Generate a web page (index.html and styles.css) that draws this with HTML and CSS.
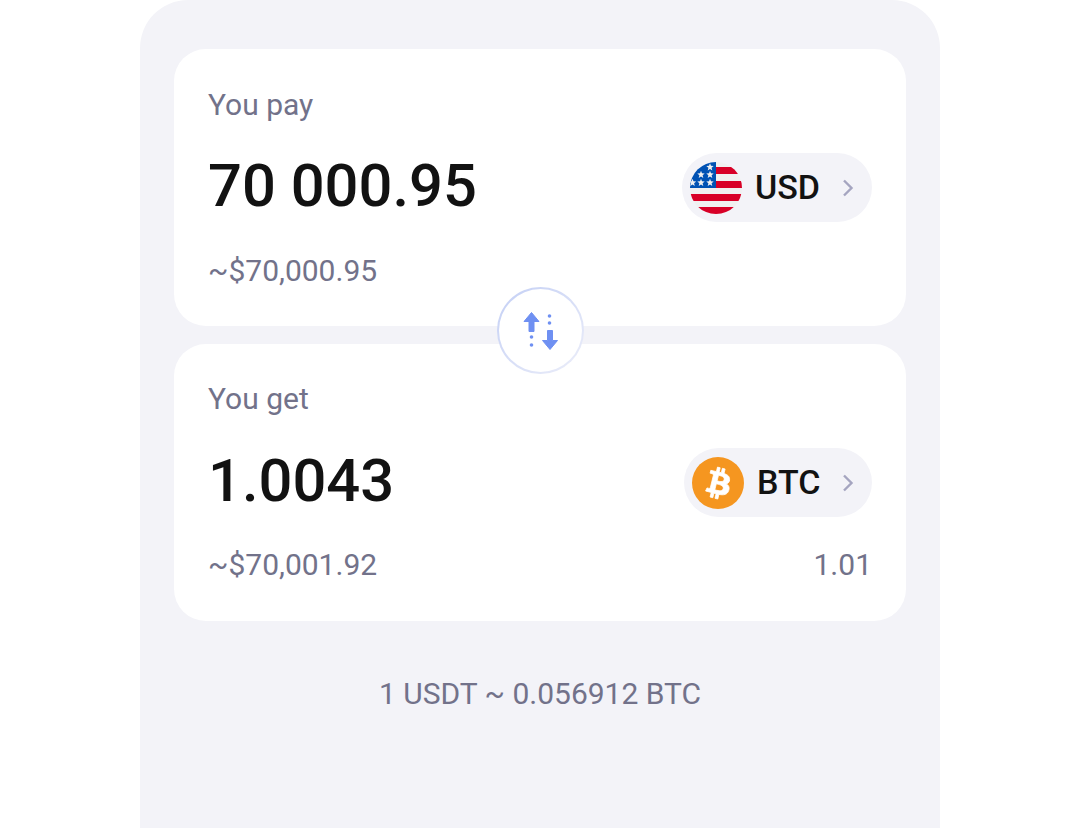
FILE: index.html
```html
<!DOCTYPE html>
<html lang="en">
<head>
    <meta charset="UTF-8">
    <meta name="viewport" content="width=device-width, initial-scale=1.0">
    <title>Exchange</title>
    <link rel="stylesheet" href="styles.css">
</head>
<body>
    <div class="panel">
        <div class="cards">
            <section class="card">
                <div class="label">You pay</div>
                <div class="row">
                    <div class="amount">70 000.95</div>
                    <button class="pill pill-usd">
                        <svg class="coin" viewBox="0 0 52 52">
                            <defs>
                                <clipPath id="flagClip"><circle cx="26" cy="26" r="26"/></clipPath>
                                <path id="star" d="M0-3.800l1 2.600 2.700.2-2.100 1.700.7 2.700-2.300-1.500-2.300 1.500.7-2.700-2.100-1.700 2.700-.2z"/>
                            </defs>
                            <g clip-path="url(#flagClip)">
                                <rect width="52" height="52" fill="#f0f0f0"/>
                                <rect x="26" y="5" width="26" height="7" fill="#d80027"/>
                                <rect x="26" y="19" width="26" height="7" fill="#d80027"/>
                                <rect y="32" width="52" height="7" fill="#d80027"/>
                                <rect y="45" width="52" height="7" fill="#d80027"/>
                                <rect width="26" height="26" fill="#0052b4"/>
                                <g fill="#f0f0f0">
                                    <use href="#star" x="20" y="5"/>
                                    <use href="#star" x="11" y="12.500"/>
                                    <use href="#star" x="20" y="12.500"/>
                                    <use href="#star" x="2.500" y="20.500"/>
                                    <use href="#star" x="11" y="20.500"/>
                                    <use href="#star" x="20" y="20.500"/>
                                </g>
                            </g>
                        </svg>
                        <span class="code">USD</span>
                        <svg class="chev" viewBox="0 0 12 18"><path d="M2 1.500l7.500 7.500-7.500 7.500" fill="none" stroke="#a5a5c0" stroke-width="2.400"/></svg>
                    </button>
                </div>
                <div class="foot"><span>~$70,000.95</span></div>
            </section>
            <button class="swap">
                <svg viewBox="0 0 36 40" width="36" height="40">
                    <g fill="#6f90f2" stroke="#6f90f2" stroke-width="1" stroke-linejoin="round">
                        <path d="M8.500 1.500l7.500 9h-5v10h-5v-10h-5z"/>
                        <path d="M27 38.500l-7.500-9h5v-10h5v10h5z"/>
                    </g>
                    <g fill="#6f90f2">
                        <circle cx="8.500" cy="26" r="1.800"/>
                        <circle cx="8.500" cy="34" r="1.800"/>
                        <circle cx="26.500" cy="5" r="1.800"/>
                        <circle cx="26.500" cy="12" r="1.800"/>
                    </g>
                </svg>
            </button>
            <section class="card card-get">
                <div class="label">You get</div>
                <div class="row">
                    <div class="amount">1.0043</div>
                    <button class="pill pill-btc">
                        <svg class="coin" viewBox="0 0 52 52">
                            <circle cx="26" cy="26" r="26" fill="#f59620"/>
                            <path fill="#fff" stroke="#fff" stroke-width=".8" d="M37.500 22.800c.5-3.300-2-5.100-5.500-6.300l1.100-4.500-2.700-.7-1.100 4.400-2.200-.5 1.100-4.400-2.700-.7-1.100 4.500-1.800-.4-3.800-.9-.7 2.900s2 .5 2 .5c1.100.3 1.300 1 1.300 1.600l-3.100 12.500c-.1.300-.5.800-1.300.6 0 0-2-.5-2-.5l-1.400 3.100 3.600.9 2 .5-1.100 4.600 2.700.7 1.100-4.500 2.200.6-1.100 4.500 2.800.7 1.100-4.600c4.700.9 8.300.5 9.800-3.800 1.200-3.400-.1-5.400-2.500-6.700 1.800-.4 3.100-1.600 3.500-4zm-6.300 8.900c-.8 3.400-6.500 1.600-8.400 1.100l1.500-6c1.900.5 7.800 1.400 6.900 4.900zm.9-9c-.8 3.100-5.500 1.500-7 1.100l1.400-5.500c1.500.4 6.500 1.100 5.600 4.400z"/>
                        </svg>
                        <span class="code">BTC</span>
                        <svg class="chev" viewBox="0 0 12 18"><path d="M2 1.500l7.500 7.500-7.500 7.500" fill="none" stroke="#a5a5c0" stroke-width="2.400"/></svg>
                    </button>
                </div>
                <div class="foot"><span>~$70,001.92</span><span>1.01</span></div>
            </section>
        </div>
        <p class="rate">1 USDT ~ 0.056912 BTC</p>
    </div>
</body>
</html>
```

FILE: styles.css
```css
body {
    margin: 0;
    background-color: #fff;
    font-family: 'Roboto', sans-serif;
    color: #121212;
    height: 828px;
    overflow: hidden;
}

.panel {
    width: 800px;
    height: 828px;
    margin: 0 auto;
    padding: 49px 34px 0;
    box-sizing: border-box;
    background-color: #f3f3f8;
    border-radius: 48px 48px 0 0;
}

.cards {
    position: relative;
    display: flex;
    flex-direction: column;
    gap: 18px;
}

.card {
    height: 277px;
    box-sizing: border-box;
    padding: 38px 34px 0;
    background-color: #fff;
    border-radius: 32px;
}

.label {
    font-size: 30px;
    line-height: 36px;
    color: #72728a;
}

.row {
    display: flex;
    justify-content: space-between;
    align-items: center;
    margin-top: 30px;
    height: 69px;
}

.amount {
    font-size: 59.700px;
    font-weight: 500;
    line-height: 69px;
    margin-top: -2px;
}

.pill {
    display: flex;
    align-items: center;
    height: 69px;
    padding: 0 0 0 8px;
    border: none;
    border-radius: 35px;
    background-color: #f3f3f8;
    font-family: inherit;
    color: #121212;
}

.pill-usd {
    width: 190px;
}

.pill-btc {
    width: 188px;
}

.coin {
    width: 52px;
    height: 52px;
    flex-shrink: 0;
}

.code {
    margin-left: 13px;
    font-size: 34px;
    font-weight: 500;
    line-height: 38px;
    margin-top: -2px;
}

.chev {
    width: 12px;
    height: 18px;
    margin-left: auto;
    margin-right: 18px;
}

.foot {
    display: flex;
    justify-content: space-between;
    margin-top: 31px;
    font-size: 30px;
    line-height: 36px;
    color: #72728a;
}

.card-get {
    padding-top: 37px;
}

.card-get .row {
    margin-top: 31px;
}

.card-get .foot {
    margin-top: 30px;
}

.swap {
    position: absolute;
    top: 238px;
    left: 323px;
    width: 87px;
    height: 87px;
    padding: 0;
    display: flex;
    align-items: center;
    justify-content: center;
    border: 2.500px solid transparent;
    border-radius: 50%;
    background: linear-gradient(#fff, #fff) padding-box, linear-gradient(135deg, #c3cff5, #eceef9) border-box;
}

.rate {
    margin: 55px 0 0;
    text-align: center;
    font-size: 30px;
    line-height: 36px;
    color: #72728a;
}
```
